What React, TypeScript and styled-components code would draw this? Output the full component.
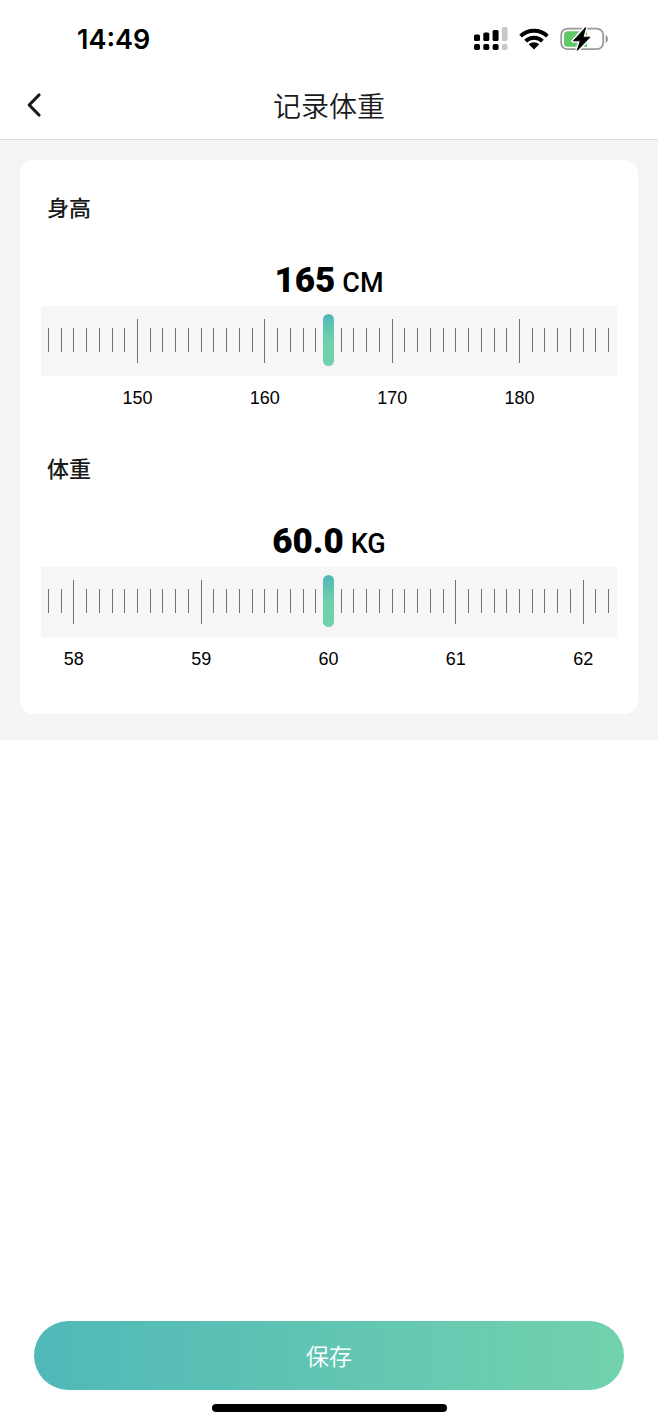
import React, { useState } from "react";
import styled, { createGlobalStyle } from "styled-components";

const GlobalStyle = createGlobalStyle`
  * { box-sizing: border-box; }
  body {
    margin: 0;
    background: #fff;
    color: #000;
    font-family: "Liberation Sans", "Noto Sans CJK SC", sans-serif;
  }
`;

const cjk = `"Noto Sans CJK SC", sans-serif`;

const Page = styled.div`
  display: flex;
  flex-direction: column;
  min-height: 100vh;
`;

const StatusBar = styled.div`
  display: flex;
  align-items: center;
  justify-content: space-between;
  height: 72px;
  padding: 6px 49px 0 77px;
`;

const Clock = styled.time`
  padding-top: 2px;
  font: 600 27px/32px Inter, sans-serif;
`;

const StatusIcons = styled.div`
  display: flex;
  align-items: center;
  gap: 11px;
`;

const Header = styled.header`
  display: grid;
  grid-template-columns: 68px 1fr 68px;
  align-items: center;
  height: 68px;
  padding-bottom: 2px;
  border-bottom: 1px solid #dcdcdc;
`;

const BackButton = styled.button`
  display: flex;
  align-items: center;
  justify-content: center;
  height: 48px;
  padding: 0;
  border: 0;
  background: none;
`;

const Title = styled.h1`
  margin: 0;
  text-align: center;
  color: #1a1a1a;
  font: 350 28px/40px ${cjk};
`;

const Content = styled.main`
  padding: 20px 20px 26px;
  background: #f5f5f5;
`;

const Card = styled.form`
  display: flex;
  flex-direction: column;
  gap: 41px;
  padding: 30px 21px 43px;
  border-radius: 14px;
  background: #fff;
`;

const Field = styled.section`
  display: flex;
  flex-direction: column;
`;

const FieldLabel = styled.label`
  padding-left: 6px;
  color: #1a1a1a;
  font: 500 22px/32px ${cjk};
`;

const Reading = styled.output`
  display: flex;
  align-items: baseline;
  justify-content: center;
  gap: 7px;
  margin-top: 36px;
  height: 48px;
  font: 900 35px/46px Roboto, sans-serif;
`;

const Unit = styled.span`
  font-size: 27px;
  font-weight: 500;
`;

const Track = styled.div`
  display: grid;
  height: 70px;
  background: #f6f6f6;

  & > * {
    grid-area: 1 / 1;
  }
`;

const Scale = styled.div<{ $count: number }>`
  display: grid;
  grid-template-columns: repeat(${(p) => p.$count}, minmax(0, 1fr));
  align-items: center;
  justify-items: center;
  padding: 0 2px 0 1px;
`;

const Tick = styled.i<{ $major: boolean }>`
  width: 1px;
  height: ${(p) => (p.$major ? 44 : 24)}px;
  margin-bottom: ${(p) => (p.$major ? 0 : 2)}px;
  background: #707070;
`;

const Slider = styled.input`
  appearance: none;
  align-self: center;
  height: 52px;
  margin: 0 3px 2px 2px;
  background: transparent;

  &::-webkit-slider-thumb {
    appearance: none;
    width: 11px;
    height: 52px;
    border-radius: 6px;
    background: linear-gradient(#50b7b8, #6fd0ac 50%, #70d1ac);
  }
`;

const ScaleLabel = styled.span<{ $index: number }>`
  grid-column: ${(p) => p.$index - 1} / span 5;
  grid-row: 1;
  font-size: 18px;
  line-height: 24px;
`;

const Labels = styled(Scale)`
  margin-top: 10px;
`;

const Footer = styled.footer`
  display: flex;
  flex-direction: column;
  align-items: center;
  gap: 14px;
  margin-top: auto;
  padding: 24px 34px 12px;
`;

const SaveButton = styled.button`
  width: 100%;
  height: 69px;
  padding: 0 0 2px;
  border: 0;
  border-radius: 35px;
  background: linear-gradient(90deg, #50b8b8, #72d2ad);
  color: #fff;
  font: 350 23px/32px ${cjk};
`;

const HomeIndicator = styled.div`
  width: 235px;
  height: 8px;
  border-radius: 4px;
  background: #000;
`;

const SignalIcon = () => (
  <svg width="34" height="24" viewBox="0 0 34 24" aria-hidden="true">
    <g fill="#000">
      <rect x="0" y="7.5" width="6" height="6.5" rx="1.6" />
      <rect x="9.3" y="5.5" width="6" height="8.5" rx="1.6" />
      <rect x="18.6" y="3" width="6" height="11" rx="1.6" />
      <rect x="0" y="17" width="6" height="6" rx="1.8" />
      <rect x="9.3" y="17" width="6" height="6" rx="1.8" />
      <rect x="18.6" y="17" width="6" height="6" rx="1.8" />
    </g>
    <g fill="#c8c8c8">
      <rect x="27.9" y="0" width="5.6" height="14" rx="1.6" />
      <rect x="27.9" y="17" width="5.6" height="6" rx="1.8" />
    </g>
  </svg>
);

const WifiIcon = () => (
  <svg width="30" height="22" viewBox="0 0 30 22" aria-hidden="true">
    <g fill="none" stroke="#000" strokeWidth="3.8">
      <path d="M1.6 8.2a19.2 19.2 0 0 1 26.8 0" />
      <path d="M6.6 13.2a12 12 0 0 1 16.8 0" />
    </g>
    <path d="M15 21.6l-5.3-5.3a7.6 7.6 0 0 1 10.6 0z" />
  </svg>
);

const BatteryIcon = () => (
  <svg width="49" height="26" viewBox="0 0 49 26" aria-hidden="true">
    <rect x="1.2" y="2.6" width="42" height="20.6" rx="6.4" fill="none" stroke="#999" strokeWidth="1.8" />
    <path d="M45.6 9v8c1.6-.6 2.4-2.2 2.4-4s-.8-3.4-2.4-4z" fill="#999" />
    <path d="M7.5 5.3H27v15.4H7.5a3.5 3.5 0 0 1-3.5-3.5V8.8a3.5 3.5 0 0 1 3.5-3.5z" fill="#5fc763" />
    <path
      d="M25.6 1.6L13.4 14.8h7L17.2 24.4 30 11.2h-7z"
      fill="#fff"
      stroke="#fff"
      strokeWidth="4"
      strokeLinejoin="round"
    />
    <path
      d="M25.6 1.6L13.4 14.8h7L17.2 24.4 30 11.2h-7z"
      fill="#000"
      stroke="#000"
      strokeWidth="1"
      strokeLinejoin="round"
    />
  </svg>
);

const BackIcon = () => (
  <svg width="16" height="26" viewBox="0 0 16 26" aria-hidden="true">
    <path d="M13 3L3.2 13 13 23" fill="none" stroke="#1a1a1a" strokeWidth="3.2" strokeLinecap="round" strokeLinejoin="round" />
  </svg>
);

type RulerProps = {
  id: string;
  label: string;
  unit: string;
  initial: number;
  min: number;
  max: number;
  step: number;
  digits: number;
  majors: { index: number; text: string }[];
};

const TICKS = 45;

function RulerField({ id, label, unit, initial, min, max, step, digits, majors }: RulerProps) {
  const [value, setValue] = useState(initial);
  return (
    <Field>
      <FieldLabel htmlFor={id}>{label}</FieldLabel>
      <Reading htmlFor={id}>
        {value.toFixed(digits)}
        <Unit>{unit}</Unit>
      </Reading>
      <Track>
        <Scale $count={TICKS}>
          {Array.from({ length: TICKS }, (_, i) => (
            <Tick key={i} $major={majors.some((m) => m.index === i)} />
          ))}
        </Scale>
        <Slider
          id={id}
          type="range"
          min={min}
          max={max}
          step={step}
          value={value}
          onChange={(e) => setValue(Number(e.target.value))}
        />
      </Track>
      <Labels $count={TICKS}>
        {majors.map((m) => (
          <ScaleLabel key={m.text} $index={m.index}>
            {m.text}
          </ScaleLabel>
        ))}
      </Labels>
    </Field>
  );
}

const heightMajors = [
  { index: 7, text: "150" },
  { index: 17, text: "160" },
  { index: 27, text: "170" },
  { index: 37, text: "180" },
];

const weightMajors = [
  { index: 2, text: "58" },
  { index: 12, text: "59" },
  { index: 22, text: "60" },
  { index: 32, text: "61" },
  { index: 42, text: "62" },
];

export default function App() {
  return (
    <Page>
      <GlobalStyle />
      <StatusBar>
        <Clock>14:49</Clock>
        <StatusIcons>
          <SignalIcon />
          <WifiIcon />
          <BatteryIcon />
        </StatusIcons>
      </StatusBar>
      <Header>
        <BackButton type="button" aria-label="返回">
          <BackIcon />
        </BackButton>
        <Title>记录体重</Title>
      </Header>
      <Content>
        <Card id="record">
          <RulerField id="height" label="身高" unit="CM" initial={165} min={143} max={187} step={1} digits={0} majors={heightMajors} />
          <RulerField id="weight" label="体重" unit="KG" initial={60} min={57.8} max={62.2} step={0.1} digits={1} majors={weightMajors} />
        </Card>
      </Content>
      <Footer>
        <SaveButton type="submit" form="record">保存</SaveButton>
        <HomeIndicator />
      </Footer>
    </Page>
  );
}
